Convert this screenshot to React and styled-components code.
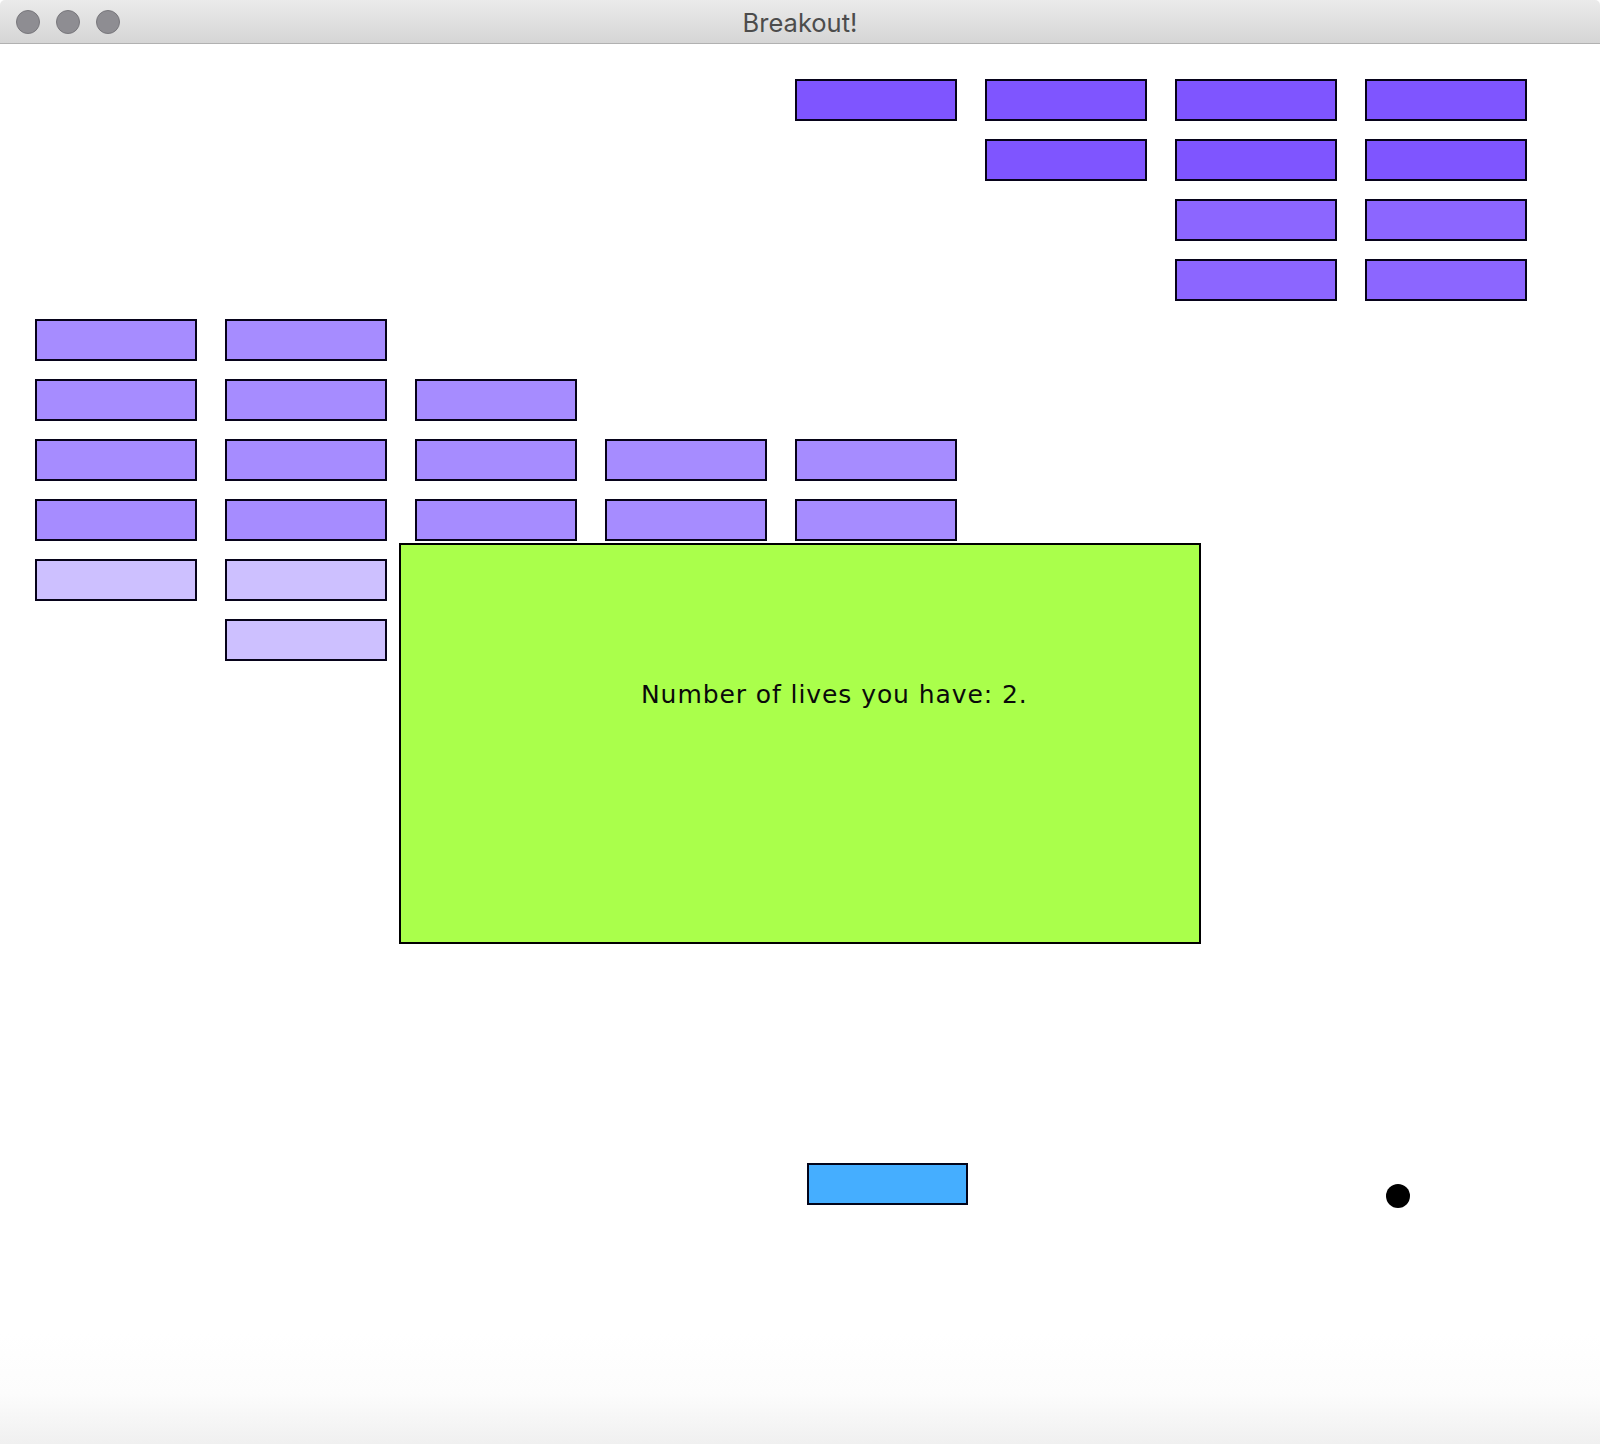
import React from "react";
import styled, { createGlobalStyle } from "styled-components";

const Global = createGlobalStyle`
  html, body { margin: 0; padding: 0; background: #ffffff; }
  #root { width: 1600px; height: 1444px; }
`;

const Window = styled.div`
  width: 1600px;
  height: 1444px;
  display: flex;
  flex-direction: column;
  overflow: hidden;
  background: #ffffff;
`;

const TitleBar = styled.header`
  height: 43px;
  flex: 0 0 auto;
  display: flex;
  align-items: center;
  position: relative;
  background: linear-gradient(#ebebeb, #d5d5d5);
  border-bottom: 1px solid #b1b1b1;
  border-radius: 5px 5px 0 0;
`;

const Lights = styled.div`
  display: flex;
  gap: 16px;
  padding-left: 16px;
  padding-top: 1px;
`;

const Light = styled.span`
  width: 22px;
  height: 22px;
  border-radius: 50%;
  background: #8e8d92;
  border: 1px solid #78777c;
`;

const Title = styled.h1`
  position: absolute;
  left: 0;
  right: 0;
  margin: 0;
  padding-top: 2px;
  text-align: center;
  font-family: Inter, "Open Sans", sans-serif;
  font-weight: 400;
  font-size: 25.5px;
  color: #4c4c4c;
  pointer-events: none;
`;

const Board = styled.main`
  position: relative;
  flex: 1;
  background: linear-gradient(
    #ffffff 0,
    #ffffff 1290px,
    #fcfcfc 1350px,
    #f0f0f0 100%
  );
`;

const BrickGrid = styled.div`
  display: grid;
  grid-template-columns: repeat(8, 162px);
  grid-template-rows: repeat(10, 42px);
  column-gap: 28px;
  row-gap: 18px;
  padding: 35px 0 0 35px;
`;

const Brick = styled.div`
  grid-column: ${(p) => p.$col + 1};
  grid-row: ${(p) => p.$row + 1};
  box-sizing: border-box;
  border: 2px solid #07031a;
  background: ${(p) => p.$color};
`;

const Message = styled.div`
  position: absolute;
  left: 399px;
  top: 499px;
  width: 802px;
  height: 401px;
  box-sizing: border-box;
  border: 2px solid #000000;
  background: #aaff4b;
  padding: 135px 0 0 240px;
  font-family: "DejaVu Sans", Verdana, sans-serif;
  font-size: 25px;
  letter-spacing: 0.92px;
  line-height: 30px;
  color: #0a0a0a;
  white-space: nowrap;
`;

const Paddle = styled.div`
  position: absolute;
  left: 807px;
  top: 1119px;
  width: 161px;
  height: 42px;
  box-sizing: border-box;
  border: 2px solid #02041a;
  background: #45aeff;
`;

const Ball = styled.div`
  position: absolute;
  left: 1386px;
  top: 1140px;
  width: 24px;
  height: 24px;
  border-radius: 50%;
  background: #000000;
`;

const rowColors = [
  "#7f55ff",
  "#7f55ff",
  "#8c66ff",
  "#8c66ff",
  "#a68cff",
  "#a68cff",
  "#a68cff",
  "#a68cff",
  "#cdc0ff",
  "#cdc0ff",
];

const layout = [
  [4, 5, 6, 7],
  [5, 6, 7],
  [6, 7],
  [6, 7],
  [0, 1],
  [0, 1, 2],
  [0, 1, 2, 3, 4],
  [0, 1, 2, 3, 4],
  [0, 1],
  [1],
];

const bricks = layout.flatMap((cols, row) =>
  cols.map((col) => ({ row, col, color: rowColors[row] }))
);

export default function App() {
  return (
    <>
      <Global />
      <Window>
        <TitleBar>
          <Lights>
            <Light />
            <Light />
            <Light />
          </Lights>
          <Title>Breakout!</Title>
        </TitleBar>
        <Board>
          <BrickGrid>
            {bricks.map((b) => (
              <Brick
                key={`${b.row}-${b.col}`}
                $row={b.row}
                $col={b.col}
                $color={b.color}
              />
            ))}
          </BrickGrid>
          <Message>Number of lives you have: 2.</Message>
          <Paddle />
          <Ball />
        </Board>
      </Window>
    </>
  );
}
